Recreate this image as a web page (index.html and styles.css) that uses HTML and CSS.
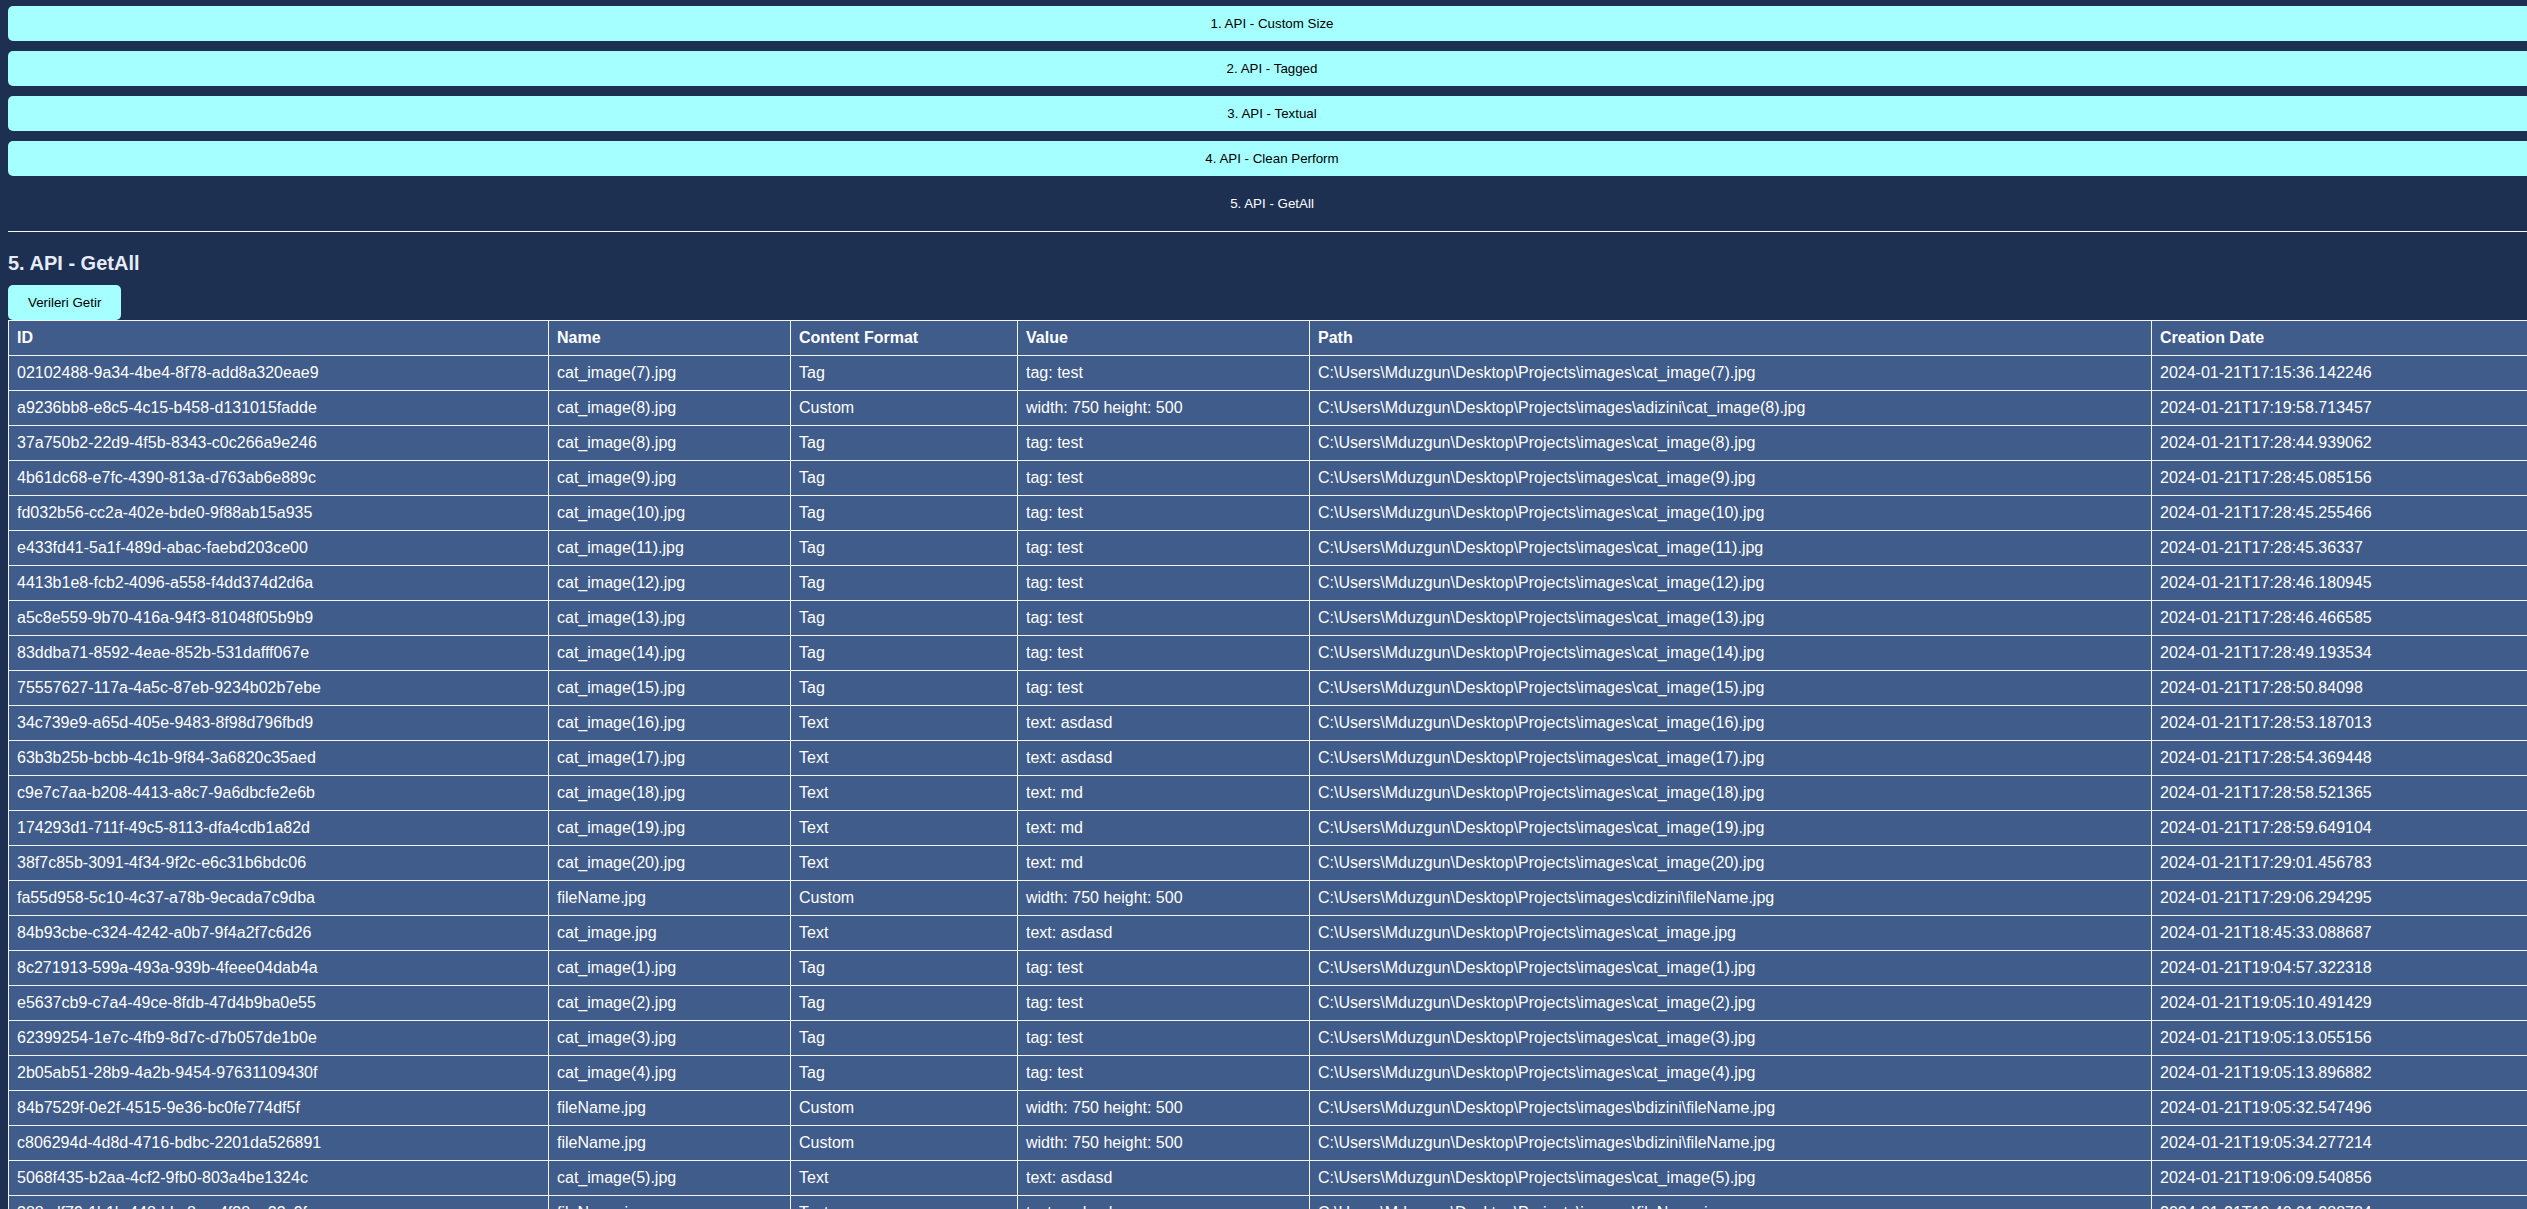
FILE: index.html
```html
<!DOCTYPE html>
<html lang="tr">
<head>
<meta charset="utf-8">
<title>API</title>
<link rel="stylesheet" href="styles.css">
</head>
<body>
<div class="page">
  <nav class="tabs">
    <button class="tab">1. API - Custom Size</button>
    <button class="tab">2. API - Tagged</button>
    <button class="tab">3. API - Textual</button>
    <button class="tab">4. API - Clean Perform</button>
    <button class="tab active">5. API - GetAll</button>
  </nav>
  <hr class="divider">
  <h2 class="title">5. API - GetAll</h2>
  <button class="fetch">Verileri Getir</button>
  <table class="data">
    <colgroup>
      <col class="c-id"><col class="c-name"><col class="c-format"><col class="c-value"><col class="c-path"><col class="c-date">
    </colgroup>
    <thead>
      <tr><th>ID</th><th>Name</th><th>Content Format</th><th>Value</th><th>Path</th><th>Creation Date</th></tr>
    </thead>
    <tbody>
      <tr><td>02102488-9a34-4be4-8f78-add8a320eae9</td><td>cat_image(7).jpg</td><td>Tag</td><td>tag: test</td><td>C:\Users\Mduzgun\Desktop\Projects\images\cat_image(7).jpg</td><td>2024-01-21T17:15:36.142246</td></tr>
      <tr><td>a9236bb8-e8c5-4c15-b458-d131015fadde</td><td>cat_image(8).jpg</td><td>Custom</td><td>width: 750 height: 500</td><td>C:\Users\Mduzgun\Desktop\Projects\images\adizini\cat_image(8).jpg</td><td>2024-01-21T17:19:58.713457</td></tr>
      <tr><td>37a750b2-22d9-4f5b-8343-c0c266a9e246</td><td>cat_image(8).jpg</td><td>Tag</td><td>tag: test</td><td>C:\Users\Mduzgun\Desktop\Projects\images\cat_image(8).jpg</td><td>2024-01-21T17:28:44.939062</td></tr>
      <tr><td>4b61dc68-e7fc-4390-813a-d763ab6e889c</td><td>cat_image(9).jpg</td><td>Tag</td><td>tag: test</td><td>C:\Users\Mduzgun\Desktop\Projects\images\cat_image(9).jpg</td><td>2024-01-21T17:28:45.085156</td></tr>
      <tr><td>fd032b56-cc2a-402e-bde0-9f88ab15a935</td><td>cat_image(10).jpg</td><td>Tag</td><td>tag: test</td><td>C:\Users\Mduzgun\Desktop\Projects\images\cat_image(10).jpg</td><td>2024-01-21T17:28:45.255466</td></tr>
      <tr><td>e433fd41-5a1f-489d-abac-faebd203ce00</td><td>cat_image(11).jpg</td><td>Tag</td><td>tag: test</td><td>C:\Users\Mduzgun\Desktop\Projects\images\cat_image(11).jpg</td><td>2024-01-21T17:28:45.36337</td></tr>
      <tr><td>4413b1e8-fcb2-4096-a558-f4dd374d2d6a</td><td>cat_image(12).jpg</td><td>Tag</td><td>tag: test</td><td>C:\Users\Mduzgun\Desktop\Projects\images\cat_image(12).jpg</td><td>2024-01-21T17:28:46.180945</td></tr>
      <tr><td>a5c8e559-9b70-416a-94f3-81048f05b9b9</td><td>cat_image(13).jpg</td><td>Tag</td><td>tag: test</td><td>C:\Users\Mduzgun\Desktop\Projects\images\cat_image(13).jpg</td><td>2024-01-21T17:28:46.466585</td></tr>
      <tr><td>83ddba71-8592-4eae-852b-531dafff067e</td><td>cat_image(14).jpg</td><td>Tag</td><td>tag: test</td><td>C:\Users\Mduzgun\Desktop\Projects\images\cat_image(14).jpg</td><td>2024-01-21T17:28:49.193534</td></tr>
      <tr><td>75557627-117a-4a5c-87eb-9234b02b7ebe</td><td>cat_image(15).jpg</td><td>Tag</td><td>tag: test</td><td>C:\Users\Mduzgun\Desktop\Projects\images\cat_image(15).jpg</td><td>2024-01-21T17:28:50.84098</td></tr>
      <tr><td>34c739e9-a65d-405e-9483-8f98d796fbd9</td><td>cat_image(16).jpg</td><td>Text</td><td>text: asdasd</td><td>C:\Users\Mduzgun\Desktop\Projects\images\cat_image(16).jpg</td><td>2024-01-21T17:28:53.187013</td></tr>
      <tr><td>63b3b25b-bcbb-4c1b-9f84-3a6820c35aed</td><td>cat_image(17).jpg</td><td>Text</td><td>text: asdasd</td><td>C:\Users\Mduzgun\Desktop\Projects\images\cat_image(17).jpg</td><td>2024-01-21T17:28:54.369448</td></tr>
      <tr><td>c9e7c7aa-b208-4413-a8c7-9a6dbcfe2e6b</td><td>cat_image(18).jpg</td><td>Text</td><td>text: md</td><td>C:\Users\Mduzgun\Desktop\Projects\images\cat_image(18).jpg</td><td>2024-01-21T17:28:58.521365</td></tr>
      <tr><td>174293d1-711f-49c5-8113-dfa4cdb1a82d</td><td>cat_image(19).jpg</td><td>Text</td><td>text: md</td><td>C:\Users\Mduzgun\Desktop\Projects\images\cat_image(19).jpg</td><td>2024-01-21T17:28:59.649104</td></tr>
      <tr><td>38f7c85b-3091-4f34-9f2c-e6c31b6bdc06</td><td>cat_image(20).jpg</td><td>Text</td><td>text: md</td><td>C:\Users\Mduzgun\Desktop\Projects\images\cat_image(20).jpg</td><td>2024-01-21T17:29:01.456783</td></tr>
      <tr><td>fa55d958-5c10-4c37-a78b-9ecada7c9dba</td><td>fileName.jpg</td><td>Custom</td><td>width: 750 height: 500</td><td>C:\Users\Mduzgun\Desktop\Projects\images\cdizini\fileName.jpg</td><td>2024-01-21T17:29:06.294295</td></tr>
      <tr><td>84b93cbe-c324-4242-a0b7-9f4a2f7c6d26</td><td>cat_image.jpg</td><td>Text</td><td>text: asdasd</td><td>C:\Users\Mduzgun\Desktop\Projects\images\cat_image.jpg</td><td>2024-01-21T18:45:33.088687</td></tr>
      <tr><td>8c271913-599a-493a-939b-4feee04dab4a</td><td>cat_image(1).jpg</td><td>Tag</td><td>tag: test</td><td>C:\Users\Mduzgun\Desktop\Projects\images\cat_image(1).jpg</td><td>2024-01-21T19:04:57.322318</td></tr>
      <tr><td>e5637cb9-c7a4-49ce-8fdb-47d4b9ba0e55</td><td>cat_image(2).jpg</td><td>Tag</td><td>tag: test</td><td>C:\Users\Mduzgun\Desktop\Projects\images\cat_image(2).jpg</td><td>2024-01-21T19:05:10.491429</td></tr>
      <tr><td>62399254-1e7c-4fb9-8d7c-d7b057de1b0e</td><td>cat_image(3).jpg</td><td>Tag</td><td>tag: test</td><td>C:\Users\Mduzgun\Desktop\Projects\images\cat_image(3).jpg</td><td>2024-01-21T19:05:13.055156</td></tr>
      <tr><td>2b05ab51-28b9-4a2b-9454-97631109430f</td><td>cat_image(4).jpg</td><td>Tag</td><td>tag: test</td><td>C:\Users\Mduzgun\Desktop\Projects\images\cat_image(4).jpg</td><td>2024-01-21T19:05:13.896882</td></tr>
      <tr><td>84b7529f-0e2f-4515-9e36-bc0fe774df5f</td><td>fileName.jpg</td><td>Custom</td><td>width: 750 height: 500</td><td>C:\Users\Mduzgun\Desktop\Projects\images\bdizini\fileName.jpg</td><td>2024-01-21T19:05:32.547496</td></tr>
      <tr><td>c806294d-4d8d-4716-bdbc-2201da526891</td><td>fileName.jpg</td><td>Custom</td><td>width: 750 height: 500</td><td>C:\Users\Mduzgun\Desktop\Projects\images\bdizini\fileName.jpg</td><td>2024-01-21T19:05:34.277214</td></tr>
      <tr><td>5068f435-b2aa-4cf2-9fb0-803a4be1324c</td><td>cat_image(5).jpg</td><td>Text</td><td>text: asdasd</td><td>C:\Users\Mduzgun\Desktop\Projects\images\cat_image(5).jpg</td><td>2024-01-21T19:06:09.540856</td></tr>
      <tr><td>388cdf79-1b1b-448d-bc8e-a4f38ee23c9f</td><td>fileName.jpg</td><td>Text</td><td>text: asdasd</td><td>C:\Users\Mduzgun\Desktop\Projects\images\fileName.jpg</td><td>2024-01-21T19:40:01.288784</td></tr>
    </tbody>
  </table>
</div>
</body>
</html>
```
FILE: styles.css
```css
* {
  box-sizing: border-box;
}

html,
body {
  background: #1d3052;
}

body {
  margin: 0;
  padding: 6px 0 0 8px;
  font-family: "Liberation Sans", Arial, sans-serif;
  color: #ffffff;
}

.page {
  width: 2528px;
}

.tabs {
  display: flex;
  flex-direction: column;
  gap: 10px;
}

.tab {
  display: block;
  width: 100%;
  height: 35px;
  padding: 0 10px;
  border: 0;
  border-radius: 5px;
  background: #a5ffff;
  color: #000000;
  font-family: "Liberation Sans", Arial, sans-serif;
  font-size: 13.333px;
  line-height: 35px;
  text-align: center;
  cursor: pointer;
}

.tab.active {
  background: transparent;
  color: #ffffff;
}

.divider {
  margin: 10px 0 0;
  height: 0;
  border: 0;
  border-top: 1px solid #f2f4f8;
}

.title {
  margin: 20px 0 10px;
  font-size: 20px;
  line-height: 23px;
  font-weight: bold;
  color: #e6ebf7;
}

.fetch {
  display: block;
  height: 35px;
  padding: 0 20px;
  border: 0;
  border-radius: 5px;
  background: #a5ffff;
  color: #000000;
  font-family: "Liberation Sans", Arial, sans-serif;
  font-size: 13.333px;
  line-height: 35px;
  cursor: pointer;
}

.data {
  width: 2528px;
  table-layout: fixed;
  border-collapse: collapse;
  background: #3f5c8b;
  font-size: 16px;
  line-height: 18px;
  color: #ffffff;
}

.data th,
.data td {
  border: 1px solid #f2f4f8;
  padding: 8px;
  text-align: left;
  white-space: nowrap;
  overflow: hidden;
}

.data th {
  font-weight: bold;
}

.c-id { width: 540px; }
.c-name { width: 242px; }
.c-format { width: 227px; }
.c-value { width: 292px; }
.c-path { width: 842px; }
.c-date { width: 385px; }
```
